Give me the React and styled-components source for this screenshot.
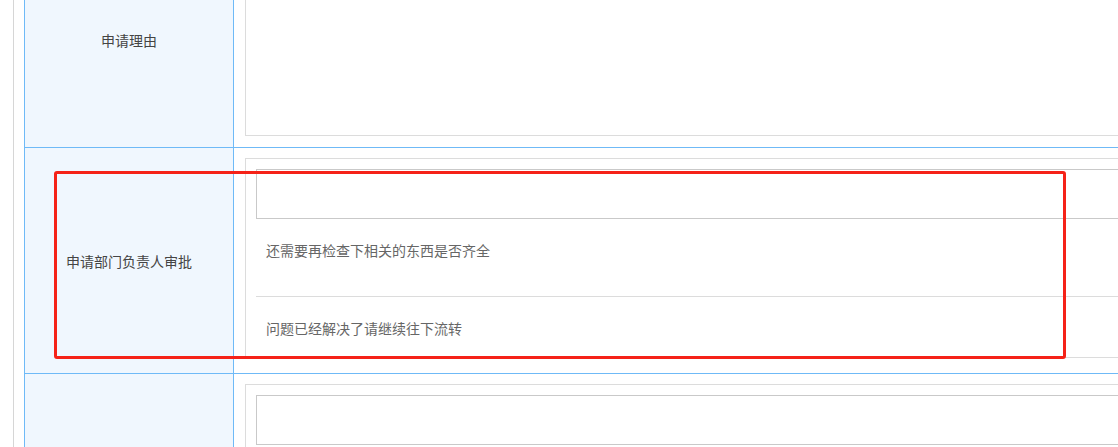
import styled, { createGlobalStyle } from "styled-components";

const GlobalStyle = createGlobalStyle`
  html {
    overflow: hidden;
  }
  body {
    margin: 0;
    padding: 0;
    background: #fff;
    font-family: "Noto Sans CJK SC", "Noto Sans", sans-serif;
    font-size: 14px;
  }
`;

const comments = [
  { id: 1, text: "还需要再检查下相关的东西是否齐全" },
  { id: 2, text: "问题已经解决了请继续往下流转" },
];

export default function App() {
  return (
    <>
      <GlobalStyle />
      <Page>
        <Frame>
          <Table>
            <Row>
              <Label>申请理由</Label>
              <Value>
                <TextBox $height={194} />
              </Value>
            </Row>
            <Row>
              <Label>申请部门负责人审批</Label>
              <Value $bottom={15}>
                <Approval>
                  <Input />
                  {comments.map((c, i) => (
                    <Comment key={c.id} $last={i === comments.length - 1}>
                      {c.text}
                    </Comment>
                  ))}
                </Approval>
              </Value>
            </Row>
            <Row>
              <Label />
              <Value>
                <Approval>
                  <Input />
                  <Spacer />
                </Approval>
              </Value>
            </Row>
          </Table>
        </Frame>
        <Highlight />
      </Page>
    </>
  );
}

const blue = "#6fbaf7";

const Page = styled.div`
  position: relative;
  width: 1118px;
  height: 447px;
  overflow: hidden;
  padding-left: 13px;
  box-sizing: border-box;
`;

const Frame = styled.div`
  display: flow-root;
  width: 1500px;
  height: 100%;
  border-left: 1px solid #d6d6d6;
  padding-left: 10px;
`;

const Table = styled.div`
  border-left: 1px solid ${blue};
  margin-top: -68px;
`;

const Row = styled.div`
  display: flex;
  border-bottom: 1px solid ${blue};
`;

const Label = styled.div`
  width: 208px;
  flex: none;
  display: flex;
  align-items: center;
  justify-content: center;
  background: #f0f7fe;
  border-right: 1px solid ${blue};
  color: #444;
  font-size: 14px;
  font-weight: 400;
`;

const Value = styled.div`
  flex: 1;
  padding: 10px 0 ${(p) => p.$bottom ?? 11}px 11px;
`;

const TextBox = styled.div`
  height: ${(p) => p.$height}px;
  border: 1px solid #dcdcdc;
  border-right: none;
  box-sizing: border-box;
`;

const Approval = styled.div`
  border: 1px solid #dcdcdc;
  border-right: none;
  padding: 10px 0 0 10px;
`;

const Input = styled.div`
  height: 50px;
  border: 1px solid #c9c9c9;
  border-right: none;
  box-sizing: border-box;
`;

const Comment = styled.div`
  padding: 23px 10px ${(p) => (p.$last ? 21 : 38)}px;
  line-height: 16px;
  color: #666;
  font-size: 14px;
  border-bottom: ${(p) => (p.$last ? "none" : "1px solid #dcdcdc")};
`;

const Spacer = styled.div`
  height: 120px;
`;

const Highlight = styled.div`
  position: absolute;
  left: 54px;
  top: 171px;
  width: 1012px;
  height: 188px;
  border: 3px solid #f52218;
  border-radius: 3px;
  box-sizing: border-box;
  pointer-events: none;
`;
